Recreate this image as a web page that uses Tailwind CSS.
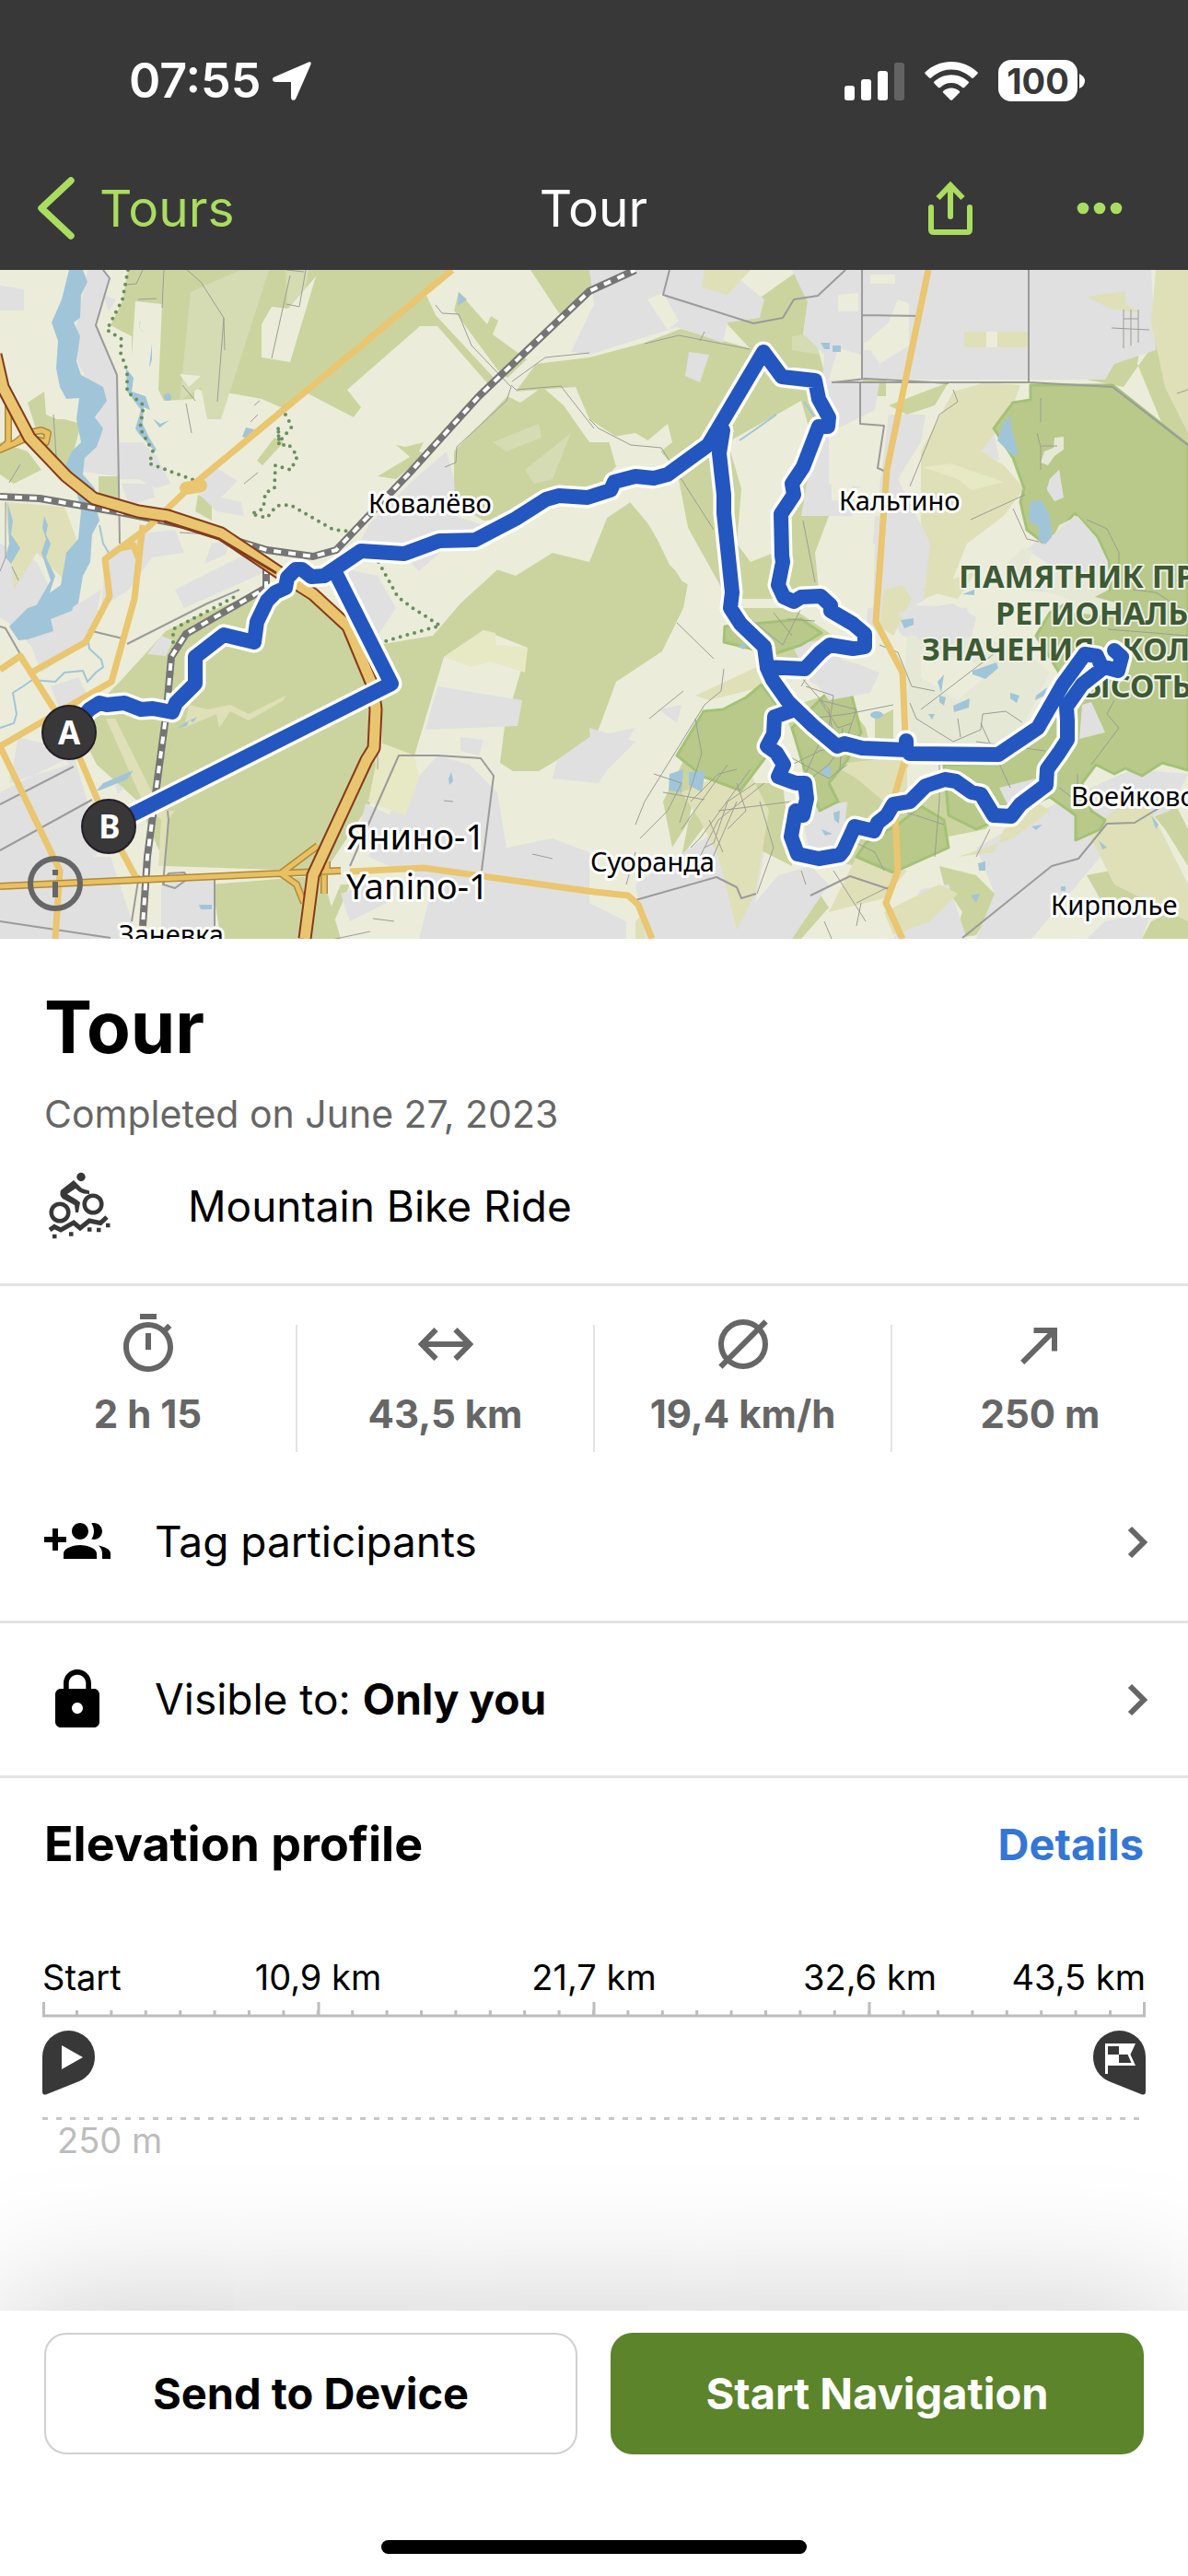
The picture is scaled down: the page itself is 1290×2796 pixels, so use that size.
<!DOCTYPE html>
<html lang="en">
<head>
    <meta charset="utf-8"/>
    <meta content="width=device-width, initial-scale=1.0" name="viewport"/>
    <title>Tour</title>
    <script src="https://cdn.jsdelivr.net/npm/@tailwindcss/browser@4"></script>
</head>
<body class="bg-white text-black font-['Inter','Liberation_Sans',sans-serif] min-h-screen flex flex-col overflow-x-hidden">
    <header class="bg-[#383838] text-white">
        <!-- Status bar -->
        <div class="flex items-center justify-between h-[159px] pt-4 pl-[140px] pr-[112px]">
            <div class="flex items-center gap-3">
                <span class="text-[52px] font-semibold leading-none">07:55</span>
                <svg class="w-11 h-11" viewBox="0 0 44 44" fill="currentColor"><path d="M40 1.500Q43.500 .5 42.500 4L26.500 40.500C25 44 21 43.500 21 39.500V23H4.500C.5 23-.5 19 3 17.500Z"/></svg>
            </div>
            <div class="flex items-center gap-[22px]">
                <svg class="w-[65px] h-[42px]" viewBox="0 0 65 42" fill="currentColor">
                    <rect x="0" y="26" width="11" height="16" rx="3"/>
                    <rect x="18" y="19" width="11" height="23" rx="3"/>
                    <rect x="36" y="10" width="11" height="32" rx="3"/>
                    <rect x="54" y="1" width="11" height="41" rx="3" opacity=".22"/>
                </svg>
                <svg class="w-[58px] h-[42px]" viewBox="0 0 58 42" fill="currentColor">
                    <path d="M29 0C40 0 50 4.300 57.300 11.300q1 1 0 2L53 17.600q-1 .9-2 0C45 12 37.500 8.600 29 8.600S13 12 7 17.600q-1 .9-2 0L.7 13.300q-1-1 0-2C8 4.300 18 0 29 0Z"/>
                    <path d="M29 14.300c7.200 0 13.700 2.800 18.500 7.300q1 1 0 2l-4.400 4.300q-1 .9-2 0C37.900 25 33.700 23 29 23s-8.900 2-12.100 4.900q-1 .9-2 0l-4.400-4.300q-1-1 0-2C15.300 17.100 21.800 14.300 29 14.300Z"/>
                    <path d="M29 28.500c3.500 0 6.500 1.300 8.700 3.300q1 1 0 2l-7.700 7.600q-1 .9-2 0l-7.700-7.600q-1-1 0-2c2.200-2 5.200-3.300 8.700-3.300Z"/>
                </svg>
                <div class="flex items-center gap-[2px]">
                    <span class="bg-white text-[#383838] rounded-[14px] w-[86px] h-[45px] flex items-center justify-center text-[38px] font-bold leading-none">100</span>
                    <svg class="w-[6px] h-4" viewBox="0 0 6 16" fill="currentColor"><path d="M0 0q6 3 6 8t-6 8Z"/></svg>
                </div>
            </div>
        </div>
        <!-- Navigation -->
        <nav class="grid grid-cols-3 items-center h-[134px] pl-10 pr-[69px] text-[55px] leading-none">
            <a href="#" class="flex items-center gap-6 text-[#aadd5f]">
                <svg class="w-11 h-[70px]" viewBox="0 0 44 70" fill="none" stroke="currentColor" stroke-width="7.500" stroke-linecap="round" stroke-linejoin="round"><path d="M37 5 5 35l32 30"/></svg>
                <span>Tours</span>
            </a>
            <span class="justify-self-center pl-7">Tour</span>
            <div class="flex items-center justify-end gap-[108px] text-[#aadd5f]">
                <button type="button" aria-label="Share">
                    <svg class="w-[54px] h-[60px]" viewBox="0 0 54 60" fill="none" stroke="currentColor" stroke-width="6"><path d="M6 29v24q0 3 3 3h36q3 0 3-3V29" stroke-linecap="round"/><path d="M27 39V6" stroke-linecap="round"/><path d="M13.500 19 27 5l13.500 14"/></svg>
                </button>
                <button type="button" aria-label="More">
                    <svg class="w-[54px] h-[60px]" viewBox="0 0 54 60" fill="currentColor"><circle cx="9" cy="30" r="6.300"/><circle cx="27" cy="30" r="6.300"/><circle cx="45" cy="30" r="6.300"/></svg>
                </button>
            </div>
        </nav>
    </header>

    <!-- Map -->
    <div class="relative">
        <svg class="block w-full h-auto" viewBox="0 293 1290 726" font-family="'Noto Sans', sans-serif">
            <defs>
                <path id="motorway" d="M-5 385 3 420 32 475 72 517 102 541 150 555 182 560 240 579 310 626 340 645 378 680 405 745 408 770 406 812 398 825 340 950 331 1019"/>
                <path id="ramps" d="M0 962 150 955 370 945M9 440V480L0 488 30 475 50 480 52 470 45 467 30 470 15 482M305 948 345 918M305 948 322 960 330 980M355 935V945M352 950V970"/>
                <path id="track" d="M75 795 97 770 108 763 116 765 135 763 153 770 166 769 187 773 191 763 212 742 212 713 243 689 276 697 279 675 290 652 299 643 310 638 312 627 321 618H328L338 626 352 625 392 598 439 601 477 587 516 586 560 563 593 542 607 538 638 540 663 532 667 523 690 517 710 519 725 515 769 483 781 463 829 382 849 409 885 413 889 433 900 453 899 463 889 463 872 507 860 525 862 537 848 558 849 603 850 610 845 635 851 648 862 653 870 648 891 647 902 657V663L926 677 939 688V702L926 704 901 700 891 708 874 726 833 724M785 467 781 492 786 537V557L795 643 793 660 804 677 830 702 833 725 839 738 856 762 883 788 909 810 917 807 936 812 984 814V804 814L988 818 1084 819 1127 790 1154 743 1178 710 1191 712 1196 723 1214 728 1218 713 1210 706M1198 725 1175 743 1158 767 1159 782V803L1150 817 1137 835 1136 852 1108 873 1098 886 1079 885 1065 862 1055 860 1038 848 1026 846 1005 853 988 870 970 873 963 885 953 893 949 902 928 897 916 923 912 928 889 932 866 927 859 908 864 880 872 885 876 867 874 850 864 850 845 843 851 830 843 817 833 810 840 797 841 778 858 772M118 897 425 742 365 623"/>
            </defs>
            <rect x="0" y="293" width="1290" height="726" fill="#ebedda"/>

            <!-- Forest -->
            <g fill="#cbd49f">
                <path d="M139 293 133 327 120 353 143 365 143 387 147 327 176 330 172 423 178 435 211 433 211 420 240 435 245 426 284 433 307 443 334 427 384 453 392 442 377 423 456 354H475L531 418 539 413 473 342 462 318 491 293Z"/>
                <path d="M576 293H645V310L618 340 607 340ZM498 317 529 352 533 343 541 348 535 363 572 390 551 410 543 405 493 337Z"/>
                <path d="M493 490 551 430 565 437 589 420 612 440 640 480 700 480 720 487 723 515 690 520 640 540 607 538 560 563 525 565 493 545ZM560 425 582 395 640 388 700 372 739 357 814 378 790 352V348L868 293H895L877 328 872 365 890 385 897 412 900 560 885 600 890 650H790L740 560 720 500 683 483 640 455 625 420Z"/>
                <path d="M410 700 470 690 500 655 560 600 600 590 640 575 692 540 727 613 747 633 742 660 719 707 669 740 648 797 605 825 585 837H557L543 828 548 788 573 703 525 684 482 713 450 820 415 807Z"/>
                <path d="M180 685 210 670 290 640 330 620 376 680 402 742 410 860 350 950 330 945 180 940 165 905 150 870 105 830 85 790 110 760 130 740Z"/>
                <path d="M230 960 350 950 370 1019H240ZM370 960H380L355 1019H345Z"/>
                <path d="M30 437 48 425 50 450 62 455 70 455 88 460 80 490 70 510 50 500ZM0 480 30 490 45 510 15 525 0 515ZM107 517 128 517V548H107ZM215 537 230 545V565L212 555Z"/>
                <path d="M298 475 308 480 285 505 279 500ZM410 517 455 490 462 493 430 520ZM430 483 440 485 460 480 450 500Z"/>
                <path d="M940 385 962 370V430H935ZM965 440 1030 415 1015 440 985 450ZM1195 345 1240 365 1235 395 1270 480 1290 510V440L1255 370 1220 420 1180 412Z"/>
                <path d="M720 870 745 820 760 830 740 930 800 850 850 850 860 940 820 920 780 840 730 920ZM790 660 860 660 920 700 880 730 840 720ZM850 770 910 750 940 790 950 830 990 820 970 880 930 940 880 930 870 820ZM950 780 970 770 970 830 950 830ZM1000 860 1050 850 1080 890 1070 900 1020 910 970 945 940 940 970 880Z"/>
                <path d="M850 1000 890 970 900 985 870 1019H845ZM1020 940 1060 950 1085 975 1060 1015 1035 1019 1045 990 1025 960ZM1120 920 1165 900 1180 925 1140 960ZM1180 950 1230 940 1250 970 1200 985ZM1240 870 1270 860 1290 900V940L1265 900ZM1250 1000 1290 980V1019H1240ZM1130 880 1155 870 1150 900Z"/>
            </g>
            <g fill="#d5dcb3">
                <path d="M207 317 245 300 262 293H292L240 455H225L218 420 195 435ZM310 293H335L327 345 312 330Z"/>
                <path d="M535 480 585 460 588 475 550 490ZM570 510 620 470 600 520 580 525ZM860 365 885 362 890 385 860 380Z"/>
            </g>
            <g fill="#ebedda">
                <path d="M295 333 313 335 343 300 315 393 284 388V352ZM195 406 218 408 205 420ZM660 475 690 470 710 482 735 510 760 640 730 600 680 540 690 530 670 510Z"/>
                <path d="M665 510 725 460 730 480 705 500 720 550 710 555ZM790 480 870 435 880 470 865 520 840 560 840 600 815 610 800 590 805 530ZM690 545 705 540 740 605 755 640 740 630Z"/>
                <path d="M530 590 580 575 640 545 660 560 640 610 600 600 560 625 530 615 500 655 490 640ZM640 540 670 540 645 560Z"/>
            </g>

            <!-- Built-up areas -->
            <g fill="#e0e0e0">
                <path d="M0 310 26 314V337H0ZM95 293H112L119 301 104 353 128 407 130 517 90 512 95 480 110 440 85 395 80 370ZM112 320 126 325 118 338ZM130 480 155 480 170 495 185 525 170 530 150 520 130 520Z"/>
                <path d="M132 525 165 525 168 540 140 548ZM235 508 258 522 240 540 262 545 265 560 235 555 215 535 215 525ZM145 580 190 575 200 600 165 605 140 640 110 660 115 600ZM230 590 250 585 245 602 222 612ZM190 640 280 595 290 620 200 660Z"/>
                <path d="M450 520 485 490 493 520 495 560 525 570 480 585 440 600 385 600 400 570ZM365 615 410 625 430 660 410 690 380 680ZM430 595 480 598 455 620Z"/>
                <path d="M640 293H790L830 325 825 345 790 350 785 372 735 355 640 385 620 382 645 330ZM860 293H1250L1255 380 1210 395 1200 412 893 412 895 385 872 362 877 328Z"/>
                <path d="M893 412 955 415 950 445 900 470 900 525 955 530 960 490 965 450 1005 450 1000 480 975 520 1010 590 1005 650 940 690 950 560 870 560 880 500ZM748 382 770 385 760 415 744 408ZM1066 485 1080 470 1085 500 1068 495Z"/>
                <path d="M0 590 40 610 60 650 75 700 50 720 15 680 0 670ZM30 690 110 640 100 690 45 730ZM0 860 80 820 110 920 90 945 0 1019ZM10 850 75 830 60 810 20 800ZM175 690 188 695 180 712 160 710ZM55 745 85 735 95 755 65 770ZM0 930 120 930 150 1019H0ZM175 960 233 950V1019H175ZM125 850 135 855 128 862Z"/>
                <path d="M475 745 567 760 562 788 462 792ZM475 820 510 830 540 860 550 920 600 910 640 925 640 1019H455L470 960 400 930 430 870ZM370 970 400 960 420 980 380 1000ZM605 825 640 800 690 790 650 850 600 845ZM500 800 525 803 520 820 500 815Z"/>
                <path d="M397 872 435 890 415 930 390 900ZM640 790 690 805 645 850ZM715 770 740 765 735 785ZM690 960 780 900 800 895 830 925 820 980 845 950 880 940 900 960 860 1019H700ZM640 980 680 1000V1019H640Z"/>
                <path d="M860 700 890 695 920 720 950 730 940 750 910 755 880 740ZM870 880 920 870 915 920 880 930ZM955 655 1050 660 1055 690 1020 705 980 690ZM1160 750 1190 750 1198 800 1165 805ZM1075 850 1120 840 1130 860 1090 875Z"/>
                <path d="M1060 920 1150 870 1230 835 1290 840 1270 880 1220 900 1170 960 1120 1019H1060L1080 970ZM1000 965 1030 960 1050 1019H970ZM1200 1000 1250 990 1240 1019H1180ZM1110 600 1160 560 1200 590 1205 640 1160 645 1110 640Z"/>
            </g>
            <path d="M910 320 932 318V338H910ZM975 325 987 330V375L955 395 940 372 965 350ZM938 372H965L958 380H938ZM945 298H972V308H945ZM910 378 935 385V412H900ZM703 325 720 318 737 348 725 358ZM903 525H925V543H903ZM928 530 955 525V560H925ZM895 640 905 600 950 590 948 660 900 660ZM1167 423 1182 420V412H1167Z" fill="#ebedda"/>

            <!-- Meadow -->
            <g fill="#dfe0b8">
                <path d="M5 545 70 550 85 590 70 630 55 615 40 600 15 640ZM765 293H815L790 320 762 312ZM1047 360H1071V377H1047ZM1083 360H1117V377H1083ZM1255 293H1290V470L1265 420 1250 350ZM1180 322 1222 316V330L1240 340 1205 335Z"/>
                <path d="M1035 425 1070 415 1108 418 1100 440 1080 470 1066 490 1090 505 1112 530 1090 560 1050 590 1030 640 1003 650 1010 590 1000 570 1000 490ZM960 640 980 635 990 650 970 690 955 680ZM1000 640 1060 620 1040 650Z"/>
                <path d="M115 780 125 780 175 880 190 880 182 890 180 940 172 940 175 890 155 870ZM205 765 225 770 250 765 270 775 310 755 308 760 270 782 250 772 238 790 235 775 200 790Z"/>
                <path d="M755 755 830 720 830 745 770 760ZM740 860 810 830 835 880 820 970 800 1010 780 930 760 890ZM905 830 985 820 985 870 960 870 930 845ZM930 930 985 945 960 975 900 990ZM1040 930 1080 925 1090 900 1110 890 1125 870 1140 880 1100 910ZM1180 900 1240 860 1290 960V1000L1210 960ZM960 990 1020 960 1040 970 1010 1000 970 1015ZM690 1000 700 990 700 1019H690Z"/>
            </g>
            <path d="M1071 360H1083V377H1071Z" fill="#ebedda"/>
            <g fill="#e7e8c4">
                <path d="M482 713 525 684 538 687V700L573 703 570 730 532 718 512 724ZM413 806 450 820 455 845 440 885 400 870ZM1003 507 1032 503 1090 523 1055 532 1040 520 1010 510Z"/>
            </g>

            <!-- Nature reserve -->
            <g fill="#b8c98a" stroke="#a4c276" stroke-width="3" stroke-linejoin="round">
                <path d="M1119 418H1208L1290 483V836L1262 828 1240 842 1222 834 1210 840 1190 830 1175 850 1185 880 1200 890 1195 900 1168 912 1168 885 1140 865 1060 900 1030 885 1025 830 1085 830 1140 770 1150 730 1125 690 1140 665 1185 640 1205 640 1204 610 1192 583 1167 557 1144 583 1135 592 1128 585 1115 575 1108 545 1112 530 1100 497 1079 465 1100 437 1119 434Z"/>
                <path d="M735 820 764 772 785 770 810 757 827 743 847 770 835 817 804 858 764 843ZM787 680 840 675 870 672 892 687 870 700 840 710 786 697Z"/>
                <path d="M860 790 900 750 925 755 935 795 920 825 900 850 910 870 890 880 875 840ZM930 930 970 947 1030 920 1025 890 1000 875 975 895 940 915Z"/>
            </g>
            <g fill="#e5e8d5">
                <path d="M1145 475 1155 474 1155 488 1145 495 1138 505 1130 502 1134 490 1144 486ZM1140 520 1150 510 1154 540 1145 544 1137 530ZM1150 570 1170 560 1190 583 1203 610 1204 640 1175 655 1130 640 1090 615 1110 595 1135 600Z"/>
                <path d="M985 690 1040 690 1105 700 1140 730 1110 790 1085 812H1060L990 808 982 740ZM1160 640 1215 655 1200 668 1160 665Z"/>
            </g>
            <g fill="#e0e0e0">
                <path d="M1140 520 1150 510 1155 540 1145 544 1137 532ZM1150 575 1168 560 1190 583 1203 610 1200 625 1150 620 1110 640 1120 600ZM1175 765 1185 762 1200 795 1172 802ZM885 740 890 710 930 720 955 730 945 752 900 760ZM975 665 1035 655 1060 670 1055 690 1010 710ZM1085 855 1125 845 1120 865 1095 875Z"/>
            </g>
            <path d="M1120 600 1150 620 1110 640ZM1000 710 1050 715 1075 730 1040 760 1000 735Z" fill="#ebedda"/>

            <!-- Water -->
            <g fill="#a1c5d8">
                <path d="M75 293H90L95 306 88 320 87 345 80 350 87 365 83 392 88 407 112 420 116 435 103 453 112 465 105 485 92 497 90 515 103 530 104 550 108 565 100 580 98 610 90 625 85 655 70 665H35L52 645 66 635 72 600 85 585 88 555 80 520 70 508 78 490 88 480 83 455 86 432 72 433 65 420 61 400 63 370 56 350 67 325Z"/>
                <path d="M8 545 14 565 12 580 22 595 12 612 6 605 10 590ZM48 560 52 570 50 580 55 590 50 605 60 625 50 655 35 665 55 630 45 600 50 585 46 573Z"/>
                <path d="M137 400 145 410 143 425 158 430 163 445 156 442 155 460 162 475 170 488 168 490 150 470 147 465 153 445 138 425ZM162 398 165 373V390L163 397ZM153 347Q148 355 157 362L151 355Z"/>
                <path d="M166 454 174 460 184 456 175 463 173 464ZM267 464 276 466 270 476 263 474ZM498 317 507 325 497 332Z"/>
                <circle cx="182" cy="431" r="4"/>
                <path d="M10 680 30 660 60 650 82 650 78 663 55 672 58 685 30 694 20 695ZM193 790 205 782 203 788ZM206 782 214 778 210 784ZM105 858 112 850 145 836 138 846 108 858ZM178 825 187 806 180 822ZM487 845 490 838 492 848 488 852ZM216 982H230V987H218Z"/>
                <path d="M891 372H901V379H895ZM904 375H913V382H904ZM1090 457 1097 452 1098 465 1106 492 1100 495 1083 478ZM1119 545 1130 542 1140 560 1142 583 1135 591 1128 586 1128 572 1117 565Z"/>
                <path d="M727 840 742 835 740 860 726 858ZM748 838 766 837 762 860 748 852ZM1056 728 1082 719 1084 725 1070 737 1056 732ZM1035 766 1053 758 1052 768 1036 773ZM1018 740 1025 732 1022 752ZM1097 752 1107 755 1104 763 1097 758ZM1125 755 1137 746 1134 755 1124 760ZM1020 755 1027 757 1025 766 1020 762ZM1008 775 1015 775 1012 781ZM978 673 992 671 992 678 982 682ZM801 702 812 697 808 705Z"/>
                <path d="M905 882 912 880 911 894 906 890ZM892 900 904 905 896 907ZM1062 937 1070 935V945H1063ZM1054 972 1064 970 1060 980ZM1120 897 1132 895 1125 901ZM1193 912 1202 920 1197 922ZM1250 885 1258 895 1255 900ZM1152 962H1157V967H1152ZM1045 645 1058 640V646Z"/>
                <ellipse cx="898" cy="837" rx="5" ry="6"/><ellipse cx="952" cy="776" rx="7" ry="4"/>
            </g>
            <g fill="none" stroke="#a1c5d8" stroke-width="2">
                <path d="M95 690 97 704 110 716 112 724 104 730 95 740 90 728 70 730 60 740 35 738 25 745 14 752 18 775 15 785 0 790M108 570 112 590 118 600M803 478 822 465 843 450M873 436 884 452"/>
            </g>

            <!-- Minor roads -->
            <g fill="none" stroke="#9c9c96" stroke-width="1">
                <path d="M178 293 176 334M136 309 148 308 155 293M203 293 218 306 243 345 236 436M243 345 244 380M150 325 170 324M315 299 295 389M311 293 330 295M332 293 325 333 311 330M198 418 212 435M58 450 62 510M202 438 208 470M0 620 6 605V545M10 524 22 504M13 615 20 630M265 525 280 513M272 458 280 450M276 440 282 435"/>
                <path d="M473 331 480 340 498 341 512 375 555 420 550 435 496 485 495 502 483 507M555 418 560 423 609 419 645 465M556 414 592 388 640 383M700 373 737 364 814 379M760 370 765 360M640 455 650 465 685 483 718 486 775 575M872 565 885 632M1035 423 1040 436 1020 450 988 528M1054 564 1113 537M1100 552 1115 585 1128 588M1220 336V378M1228 336V375M1236 336V372M1220 346H1236M1207 356 1248 358M1130 432V458M1126 470 1130 485V510M1131 484H1148M1180 564 1202 574 1215 600V640M1230 640 1255 643 1290 665M1203 683 1290 690M1278 427 1290 423"/>
                <path d="M735 676 775 715M786 726 783 750 765 765 700 870 690 895M705 780 742 750M755 780 762 818 738 893M720 860 765 868M710 840 740 850 725 880 695 910M815 835 760 910 750 920M800 850 810 880 790 900M830 850 780 890 760 930M825 870 840 920 822 970M780 880 860 870M770 890 785 925M870 735 900 770 905 800M880 780 920 775 970 765M890 760 910 790 925 785M860 830 890 815 925 808M880 845 900 830 920 800M915 790 912 835M855 672 885 674M955 700 975 708 990 745 1015 750M1000 770 1092 700M988 763 995 780 1035 805 1065 792 1067 775 1092 772 1110 784M1040 780 1043 800M1065 785 1097 855M1060 805 1135 815M1210 760 1202 775 1215 790 1185 830M1020 830 1020 870 1015 930M985 882 1025 895M1075 900 1060 930M930 915 950 925 960 945M870 945 875 960M905 945 940 1000M895 1000 903 1019M1170 840 1170 870 1150 855M690 925 680 960M930 980 970 960M935 980 930 1005M360 1020 402 1011M405 997 428 1000M578 927 600 932M482 869 492 870M195 578 230 580M410 770V835"/>
                <path d="M860 750 880 770 895 795 870 850M875 745 905 755 900 790M885 720 870 745M800 660 850 700 870 660M840 665 860 690M800 870 770 940M790 830 740 900M820 850 790 870 775 915 765 920M750 870 780 840 800 835M855 820 900 845 920 830M890 760 930 770 920 800"/>
            </g>
            <g fill="none" stroke="#9b9b9b" stroke-width="2" stroke-linejoin="round">
                <path d="M112 293 119 302 104 353 127 407 130 590M0 680 6 682 22 710M100 685 133 693M138 699 225 655 260 640M0 873 80 832M0 923 100 868M0 1000 120 1018M151 950 143 1000M233 955V1005M177 960 183 948 200 947 205 953 190 964ZM182 880 183 890 177 960"/>
                <path d="M727 293 720 320 818 351 850 345 862 325 888 321 918 293M936 293V412M934 415V460L960 462 953 508 962 512M1117 293V415M936 342 1000 343M903 415 1117 415 1208 420 1290 483M905 415 940 411 1030 416M380 940 433 820 475 820 522 823 536 842 523 945"/>
                <path d="M690 977 778 952 800 963 805 975 821 970M880 972 923 951 965 965M1045 1018 1142 940 1171 932 1202 894 1232 893 1275 867"/>
            </g>

            <!-- Footpaths -->
            <path d="M139 293 133 325 116 358 132 368 131 383 138 402 138 425 156 440 152 465 166 490 162 503 213 522M310 450 317 463 303 480 302 463 303 484 313 482 323 495 316 510 299 505 298 530 288 535 286 552 273 558 290 562 300 549 315 548 362 575 383 577M411 610 432 648 448 660 478 679 418 696M188 705V683L260 645" fill="none" stroke="#6a8f5d" stroke-width="4" stroke-linecap="round" stroke-dasharray="0 8"/>

            <!-- Railways -->
            <g fill="none" stroke-linejoin="round">
                <g stroke="#757575" stroke-width="8">
                    <path id="rail-main" d="M0 539 43 541 130 556 200 570 290 597 340 604 365 597 445 513 520 430 640 316 690 293"/>
                    <path id="rail-south" d="M289 615V638L202 688 186 713 181 770 160 930 155 1005"/>
                </g>
                <g stroke="#fff" stroke-width="4" stroke-dasharray="8 8">
                    <use href="#rail-main"/>
                    <use href="#rail-south"/>
                </g>
            </g>

            <!-- Main roads -->
            <g fill="none" stroke="#e9c66f" stroke-width="7" stroke-linejoin="round">
                <path d="M491 293 205 530 160 573 114 607 119 647 93 697 34 730M155 570 146 650 121 740 0 810M0 727 22 712 75 795 118 897 150 957M0 810 65 945 60 1019M130 595 145 592 150 605"/>
                <path d="M1008 293 963 510 951 675 980 730 984 820 971 865 975 945 962 980 980 1019M380 946 460 942 645 968 682 972 693 982 708 1019"/>
                <path d="M202 530 218 527" stroke-width="14" stroke-linecap="round"/>
            </g>
            <g fill="none" stroke-linejoin="round">
                <use href="#ramps" stroke="#b08a38" stroke-width="8"/>
                <use href="#ramps" stroke="#e9c062" stroke-width="5"/>
                <use href="#motorway" stroke="#843b1c" stroke-width="15"/>
                <use href="#motorway" stroke="#eac570" stroke-width="11"/>
                <path d="M178 566 238 585 300 622" stroke="#843b1c" stroke-width="3"/>
            </g>

            <!-- Place names -->
            <g fill="#000" stroke="#fff" stroke-width="6" stroke-linejoin="round" paint-order="stroke" font-size="29">
                <text x="400" y="557">Ковалёво</text>
                <text x="911" y="554">Кальтино</text>
                <text x="641" y="946">Суоранда</text>
                <text x="1163" y="875">Воейково</text>
                <text x="1141" y="993">Кирполье</text>
                <text x="129" y="1025">Заневка</text>
                <text x="376" y="922" font-size="38">Янино-1</text>
                <text x="376" y="976" font-size="38">Yanino-1</text>
            </g>
            <g fill="#3d5a34" stroke="#eef0e4" stroke-width="4" stroke-linejoin="round" paint-order="stroke" font-size="34" font-weight="700">
                <text x="1041" y="638">ПАМЯТНИК ПРИРОДЫ</text>
                <text x="1081" y="678">РЕГИОНАЛЬНОГО</text>
                <text x="1001" y="717">ЗНАЧЕНИЯ «КОЛТУШСКИЕ</text>
                <text x="1152" y="757">ВЫСОТЫ»</text>
            </g>

            <!-- Recorded track -->
            <g fill="none" stroke-linejoin="round" stroke-linecap="round">
                <use href="#track" stroke="#fff" stroke-width="23"/>
                <use href="#track" stroke="#2456c0" stroke-width="16"/>
            </g>

            <!-- Start and end -->
            <g fill="#383838" stroke="#241d29" stroke-width="2"><circle cx="75" cy="795" r="29"/><circle cx="118" cy="897" r="29"/></g>
            <g fill="#fff" font-size="35" font-weight="700" text-anchor="middle"><text x="75" y="808">A</text><text x="119" y="910">B</text></g>
        </svg>
        <button type="button" aria-label="Map information" class="absolute left-[30px] bottom-[30px]">
            <svg class="w-[60px] h-[60px]" viewBox="0 0 60 60" fill="none" stroke="#666" stroke-width="6"><circle cx="30" cy="30" r="27"/><path d="M30 15v6M30 28v17"/></svg>
        </button>
    </div>

    <main class="flex-1">
        <!-- Summary -->
        <section class="px-12 pt-12 pb-11 border-b-3 border-[#e3e3e3]">
            <h1 class="text-[78px] leading-[96px] font-bold">Tour</h1>
            <p class="mt-[22px] text-[41px] leading-[48px] text-[#666]">Completed on June 27, 2023</p>
            <div class="mt-9 flex items-center gap-[84px]">
                <svg class="w-[72px] h-20" viewBox="0 0 72 80" fill="none" stroke="#383838">
                    <circle cx="40" cy="8.500" r="4.700" fill="#383838" stroke="none"/>
                    <path d="M32 12 37 17 41 21 49 23.500V27Q42 27 38 24.500L34 21 25 27 35 33 39 36 37 47H34L33 39 20 32Q16 28 18 23Z" fill="#383838" stroke="none"/>
                    <circle cx="17" cy="47" r="9.300" stroke-width="4.500"/>
                    <circle cx="53" cy="38" r="9.300" stroke-width="4.500"/>
                    <path d="M6 66 11 62.500 18 66 32 58 39 64 49 56 61 58.500 68 52" stroke-width="5"/>
                    <path d="M9 73h4.500M27 70.500h4.500M47 65.500h4.500M57 66h4.500M67 61h4.500" stroke-width="4.500"/>
                </svg>
                <span class="text-[46px] leading-[56px]">Mountain Bike Ride</span>
            </div>
        </section>

        <!-- Stats -->
        <section class="flex pt-[27px] text-[#666] text-[42px] leading-[48px] font-bold text-center">
            <div class="flex-1 flex flex-col items-center gap-4 h-[153px]">
                <svg class="w-[72px] h-[72px]" viewBox="0 0 24 24" fill="currentColor"><path d="M15 1H9v2h6V1zm-4 13h2V8h-2v6zm8.030-6.610 1.420-1.420c-.43-.51-.9-.99-1.410-1.410l-1.420 1.420C16.070 4.740 14.120 4 12 4c-4.970 0-9 4.030-9 9s4.020 9 9 9 9-4.030 9-9c0-2.120-.74-4.070-1.970-5.610zM12 20c-3.870 0-7-3.130-7-7s3.130-7 7-7 7 3.130 7 7-3.130 7-7 7z"/></svg>
                <span>2 h 15</span>
            </div>
            <div class="w-[2px] h-[138px] self-end bg-[#e3e3e3]"></div>
            <div class="flex-1 flex flex-col items-center gap-4 h-[153px]">
                <svg class="w-[72px] h-[72px]" viewBox="0 0 24 24" fill="none" stroke="currentColor" stroke-width="2"><path d="M3.500 12h17M8.500 6.700 3.300 12l5.200 5.300M15.500 6.700l5.200 5.300-5.200 5.300"/></svg>
                <span>43,5 km</span>
            </div>
            <div class="w-[2px] h-[138px] self-end bg-[#e3e3e3]"></div>
            <div class="flex-1 flex flex-col items-center gap-4 h-[153px]">
                <svg class="w-[72px] h-[72px]" viewBox="0 0 24 24" fill="none" stroke="currentColor" stroke-width="2"><circle cx="12" cy="12" r="8"/><path d="M3.800 20.200 20.200 3.800"/></svg>
                <span>19,4 km/h</span>
            </div>
            <div class="w-[2px] h-[138px] self-end bg-[#e3e3e3]"></div>
            <div class="flex-1 flex flex-col items-center gap-4 h-[153px]">
                <svg class="w-[72px] h-[72px]" viewBox="0 0 24 24" fill="currentColor"><path d="M9.500 6v2h5.100L4.700 17.900l1.400 1.400L16 9.400v5.100h2V6z"/></svg>
                <span>250 m</span>
            </div>
        </section>

        <!-- Actions -->
        <button type="button" class="mt-3 w-full h-[174px] pl-12 pr-10 flex items-center gap-12 border-b-3 border-[#e3e3e3] text-[46px] text-left">
            <svg class="w-[72px] h-[72px]" viewBox="0 0 24 24" fill="currentColor"><path d="M8 10H5V7H3v3H0v2h3v3h2v-3h3v-2zm10 1c1.660 0 2.990-1.340 2.990-3S19.660 5 18 5c-.32 0-.63.05-.91.14.57.81.9 1.790.9 2.860s-.34 2.040-.9 2.860c.28.09.59.14.91.14zm-5 0c1.660 0 2.990-1.340 2.990-3S14.660 5 13 5c-1.660 0-3 1.340-3 3s1.340 3 3 3zm6.620 2.160c.83.73 1.380 1.660 1.380 2.840v2h3v-2c0-1.540-2.370-2.490-4.380-2.840zM13 13c-2 0-6 1-6 3v2h12v-2c0-2-4-3-6-3z"/></svg>
            <span class="flex-1">Tag participants</span>
            <svg class="w-7 h-9" viewBox="0 0 28 36" fill="none" stroke="#666" stroke-width="6"><path d="M5 3l15 15L5 33"/></svg>
        </button>
        <button type="button" class="w-full h-[168px] pl-12 pr-10 flex items-center gap-12 border-b-3 border-[#e3e3e3] text-[46px] text-left">
            <svg class="w-[72px] h-[72px]" viewBox="0 0 24 24" fill="currentColor"><path d="M18 8h-1V6c0-2.760-2.240-5-5-5S7 3.240 7 6v2H6c-1.100 0-2 .9-2 2v10c0 1.100.9 2 2 2h12c1.100 0 2-.9 2-2V10c0-1.100-.9-2-2-2zm-6 9c-1.100 0-2-.9-2-2s.9-2 2-2 2 .9 2 2-.9 2-2 2zm3.100-9H8.900V6c0-1.710 1.390-3.100 3.100-3.100s3.100 1.390 3.100 3.100v2z"/></svg>
            <span class="flex-1">Visible to: <b class="font-bold">Only you</b></span>
            <svg class="w-7 h-9" viewBox="0 0 28 36" fill="none" stroke="#666" stroke-width="6"><path d="M5 3l15 15L5 33"/></svg>
        </button>

        <!-- Elevation profile -->
        <section class="pt-[42px]">
            <div class="px-12 flex items-center justify-between leading-[60px]">
                <h2 class="text-[52px] font-bold">Elevation profile</h2>
                <a href="#" class="text-[47px] font-bold text-[#3476d6]">Details</a>
            </div>
            <div class="mt-[90px] px-[46px]">
                <div class="grid grid-cols-8 text-[38px] leading-[48px] text-center whitespace-nowrap">
                    <span class="text-left">Start</span>
                    <span class="col-span-2">10,9 km</span>
                    <span class="col-span-2">21,7 km</span>
                    <span class="col-span-2">32,6 km</span>
                    <span class="justify-self-end">43,5 km</span>
                </div>
                <svg class="block mt-[3px] w-full h-auto" viewBox="0 0 1198 17" fill="none" stroke="#bdbdbd" stroke-width="3">
                    <path d="M0 15h1198M1.500 0v15M300 0v15M599 0v15M898 0v15M1196.500 0v15"/>
                    <path d="M36 11.500h1160" stroke-width="5" stroke-dasharray="3 34.400"/>
                </svg>
                <div class="mt-[14px] flex justify-between">
                    <svg class="w-[57px] h-[70px]" viewBox="0 0 57 70"><path d="M0 28.500A28.500 28.500 0 0 1 57 28.500C57 40 51 50 40 55L5 69Q0 71 0 66Z" fill="#383838"/><path d="M21 16 44 29 21 42Z" fill="#fff"/></svg>
                    <svg class="w-[57px] h-[70px]" viewBox="0 0 57 70"><path d="M57 28.500A28.500 28.500 0 0 0 0 28.500C0 40 6 50 17 55L52 69Q57 71 57 66Z" fill="#383838"/><path d="M13 14H46L40.500 26 46 38H16V47H13Z" fill="#fff"/><path d="M16 17H28V26H37.500L41.500 35H28V26H16Z" fill="#383838"/></svg>
                </div>
                <svg class="block mt-6 w-full h-[3px]" stroke="#c8c8c8" stroke-width="3" stroke-dasharray="6 9"><path d="M0 1.500H2400"/></svg>
                <p class="pl-4 text-[38px] leading-[44px] text-[#bdbdbd]">250 m</p>
            </div>
        </section>
    </main>

    <!-- Bottom bar -->
    <footer class="sticky bottom-0 bg-white px-12 pt-6 pb-6 shadow-[0_0_160px_rgba(0,0,0,0.22)]">
        <div class="grid grid-cols-2 gap-9 text-[47px] font-bold">
            <button type="button" class="h-[132px] rounded-3xl border-2 border-[#d0d0d0]">Send to Device</button>
            <button type="button" class="h-[132px] rounded-3xl bg-[#5b842b] text-white">Start Navigation</button>
        </div>
        <div class="mt-[93px] mx-auto w-[462px] h-[15px] rounded-full bg-black"></div>
    </footer>
</body>
</html>
